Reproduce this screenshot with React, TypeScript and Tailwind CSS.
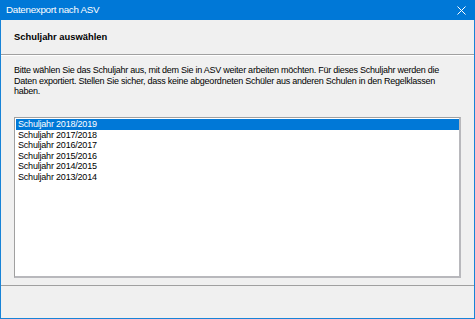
const years = ['2018/2019', '2017/2018', '2016/2017', '2015/2016', '2014/2015', '2013/2014']

export default function App() {
  return (
    <div className="w-[475px] h-[319px] flex flex-col bg-[#f0f0f0] border-x border-b border-[#1883d7] font-['Liberation_Sans',Arial,sans-serif] text-black">
      {/* Title bar */}
      <div className="h-[20px] -mx-px flex items-center justify-between bg-[#0078d7] pl-[6px] pr-[9px] text-white text-[9.8px] tracking-[-0.3px]">
        <span>Datenexport nach ASV</span>
        <svg width="9" height="9" viewBox="0 0 9 9" className="mt-[1px]">
          <path d="M0.5 0.5 L8.5 8.5 M8.5 0.5 L0.5 8.5" stroke="white" strokeWidth="1" />
        </svg>
      </div>

      {/* Header */}
      <div className="h-[35px] flex items-center px-[13px] border-b border-[#a0a0a0]">
        <span className="font-bold text-[9.4px]">Schuljahr auswählen</span>
      </div>
      <div className="h-px bg-white" />

      {/* Body */}
      <div className="flex-1 flex flex-col px-[13px] pt-[9px] pb-[7px]">
        <p className="text-[9px] leading-[10.6px] tracking-[-0.25px]">
          Bitte wählen Sie das Schuljahr aus, mit dem Sie in ASV weiter arbeiten möchten. Für dieses Schuljahr werden die
          Daten exportiert. Stellen Sie sicher, dass keine abgeordneten Schüler aus anderen Schulen in den Regelklassen
          haben.
        </p>
        <div className="mt-auto h-[161px] bg-white border-t border-l border-[#a0a0a0] border-r-2 border-b-2 border-r-[#b8b8bc] border-b-[#b8b8bc] pl-px pt-px">
          {years.map((y, i) => (
            <div
              key={y}
              className={
                'h-[10.6px] leading-[10.6px] pl-[2px] text-[9px] tracking-[-0.2px] ' +
                (i === 0 ? 'bg-[#0078d7] text-white' : '')
              }
            >
              Schuljahr {y}
            </div>
          ))}
        </div>
      </div>

      {/* Footer */}
      <div className="h-px bg-[#a0a0a0]" />
      <div className="h-[32px]" />
    </div>
  )
}
